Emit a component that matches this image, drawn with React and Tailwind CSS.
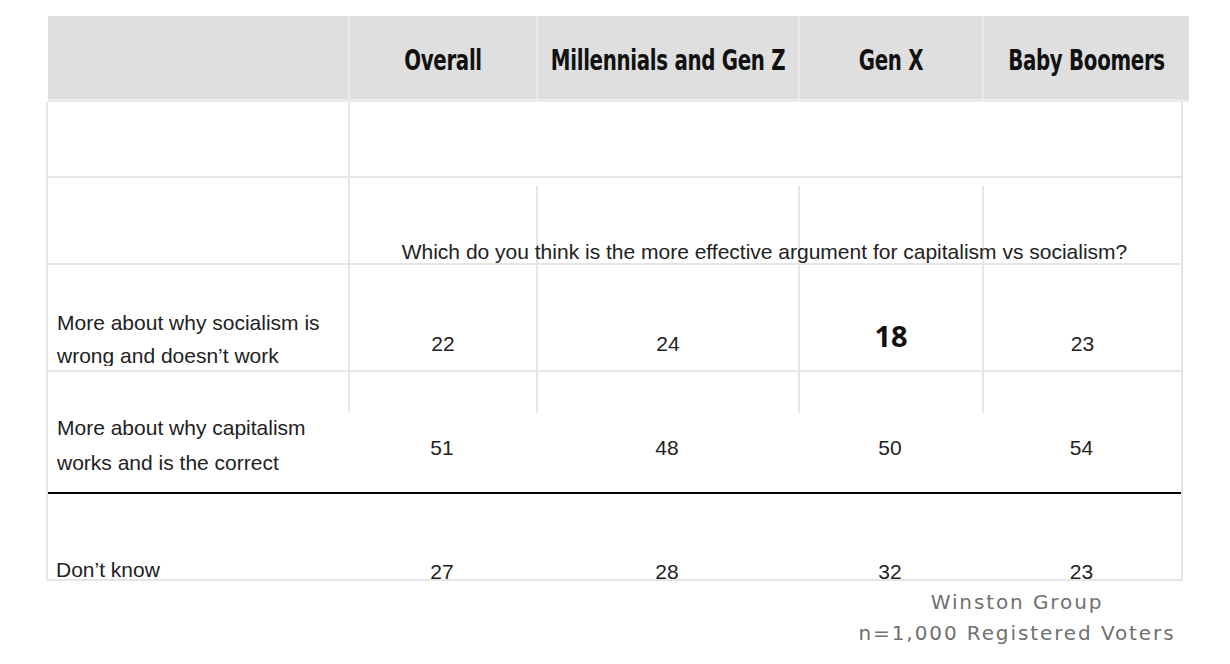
const line = 'border-[#e6e6e6]'
const bodyFont = "font-['Liberation_Sans',Arial,sans-serif] text-[21px] text-[#222]"

const headers = ['Overall', 'Millennials and Gen Z', 'Gen X', 'Baby Boomers']

const rows = [
  {
    label: ['More about why socialism is', 'wrong and doesn’t work'],
    values: ['22', '24', '18', '23'],
  },
  {
    label: ['More about why capitalism', 'works and is the correct'],
    values: ['51', '48', '50', '54'],
  },
]

function HeaderRow() {
  return (
    <div className="ml-[48px] grid h-[86px] w-[1141px] grid-cols-[300px_188px_262px_184px_207px] border-b-[3px] border-[#ebebeb] bg-[#dfdfdf]">
      <div />
      {headers.map((title) => (
        <div
          key={title}
          className="flex items-center justify-center border-l-2 border-[#e9e9e9] pt-[6px] font-['DejaVu_Sans_Condensed','Liberation_Sans',sans-serif] text-[22px] font-bold leading-none text-[#111]"
        >
          <span className="inline-block scale-y-[1.25] whitespace-nowrap tracking-[-0.3px]">{title}</span>
        </div>
      ))}
    </div>
  )
}

function App() {
  return (
    <div className="h-[664px] w-[1230px] overflow-hidden bg-white pt-[16px]">
      <HeaderRow />

      <div className={`ml-[46px] w-[1137px] border-x-2 ${line} ${bodyFont}`}>
        {/* empty spacer row */}
        <div className={`grid h-[76px] grid-cols-[300px_188px_262px_184px_199px] border-b-2 ${line}`}>
          <div />
          <div className={`border-l-2 ${line}`} />
        </div>

        {/* question row */}
        <div className={`grid h-[87px] grid-cols-[300px_188px_262px_184px_199px] overflow-hidden border-b-2 ${line}`}>
          <div className={`col-start-2 row-start-1 border-l-2 ${line}`} />
          <div className={`col-start-3 row-start-1 mt-[8px] border-l-2 ${line}`} />
          <div className={`col-start-4 row-start-1 mt-[8px] border-l-2 ${line}`} />
          <div className={`col-start-5 row-start-1 mt-[8px] border-l-2 ${line}`} />
          <p className="col-span-4 col-start-2 row-start-1 whitespace-nowrap pt-[57px] text-center leading-[33px]">
            Which do you think is the more effective argument for capitalism vs socialism?
          </p>
        </div>

        {/* socialism row */}
        <div className={`grid h-[107px] grid-cols-[300px_188px_262px_184px_199px] overflow-hidden border-b-2 ${line}`}>
          <div className="h-[101px] overflow-hidden pl-[9px] pt-[41px] leading-[33px]">
            {rows[0].label[0]}
            <br />
            {rows[0].label[1]}
          </div>
          {rows[0].values.map((value, index) =>
            index === 2 ? (
              <div
                key={index}
                className={`border-l-2 ${line} pt-[54px] text-center font-['Open_Sans',sans-serif] text-[29px] font-bold leading-[33px] text-[#111]`}
              >
                {value}
              </div>
            ) : (
              <div key={index} className={`border-l-2 ${line} pt-[62px] text-center leading-[33px]`}>
                {value}
              </div>
            ),
          )}
        </div>

        {/* capitalism row */}
        <div className="grid h-[122px] grid-cols-[300px_188px_262px_184px_199px] overflow-hidden border-b-2 border-black">
          <div className="pl-[9px] pt-[38px] leading-[35px]">
            {rows[1].label[0]}
            <br />
            {rows[1].label[1]}
          </div>
          {rows[1].values.map((value, index) => (
            <div key={index}>
              <div className={`h-[41px] border-l-2 ${line}`} />
              <p className="mt-[18px] text-center leading-[33px]">{value}</p>
            </div>
          ))}
        </div>

        {/* don't know row */}
        <div className={`grid h-[87px] grid-cols-[300px_188px_262px_184px_199px] overflow-hidden border-b-2 ${line}`}>
          <div className="pl-[8px] pt-[59px] leading-[33px]">Don’t know</div>
          {['27', '28', '32', '23'].map((value, index) => (
            <div key={index} className="pt-[61px] text-center leading-[33px]">
              {value}
            </div>
          ))}
        </div>
      </div>

      <div className="ml-[852px] mt-[6px] w-[330px] text-center font-['DejaVu_Sans',sans-serif] text-[20px] leading-[31px] tracking-[1.9px] text-[#707070]">
        <p>Winston Group</p>
        <p>n=1,000 Registered Voters</p>
      </div>
    </div>
  )
}

export default App
